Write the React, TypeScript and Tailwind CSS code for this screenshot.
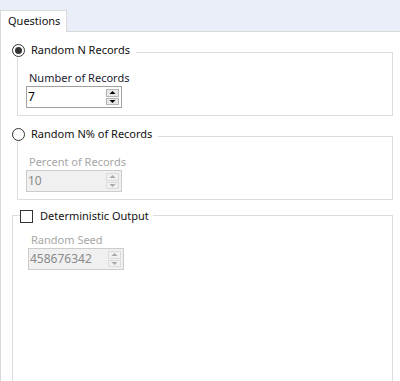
import type { ReactNode } from "react";

const FONT = { fontFamily: "'Noto Sans', 'Open Sans', sans-serif" };

function Radio({ checked }: { checked?: boolean }) {
  return (
    <span className="w-[13px] h-[13px] rounded-full border border-[#333333] bg-white flex items-center justify-center shrink-0">
      {checked && <span className="w-[7px] h-[7px] rounded-full bg-[#333333]" />}
    </span>
  );
}

function Checkbox() {
  return <span className="w-[13px] h-[13px] border border-[#333333] bg-white shrink-0" />;
}

function Arrow({ up, disabled }: { up?: boolean; disabled?: boolean }) {
  const fill = disabled ? "#a8a8a8" : "#000000";
  return (
    <svg width="7" height="3" viewBox="0 0 7 3">
      {up ? <polygon points="0.5,3 6.5,3 3.5,0" fill={fill} /> : <polygon points="0.5,0 6.5,0 3.5,3" fill={fill} />}
    </svg>
  );
}

function Spinner({ value, disabled }: { value: string; disabled?: boolean }) {
  const btn = disabled ? "border-[#dcdcdc] bg-[#f0f0f0]" : "border-[#b4b4b4] bg-[#e8e8e8]";
  return (
    <div
      className={`relative h-[22px] w-[96px] border ${
        disabled ? "border-[#cccccc] bg-[#f0f0f0] text-[#8a8a8a]" : "border-[#a0a0a0] bg-white text-black"
      } flex items-center pl-[1px] text-[12px]`}
    >
      {value}
      <div className="absolute right-[2px] top-[2px] bottom-[2px] w-[13px] flex flex-col gap-[1px]">
        <div className={`flex-1 flex items-center justify-center border ${btn}`}>
          <Arrow up disabled={disabled} />
        </div>
        <div className={`flex-1 flex items-center justify-center border ${btn}`}>
          <Arrow disabled={disabled} />
        </div>
      </div>
    </div>
  );
}

function Group({
  mark,
  title,
  children,
  disabledLabel,
  label,
}: {
  mark: ReactNode;
  title: string;
  children: ReactNode;
  disabledLabel?: boolean;
  label: string;
}) {
  return (
    <div className="flex flex-col">
      <div className="relative z-10 flex items-center h-[16px] mt-[10px] ml-[11px]">
        <span className="flex items-center bg-white pr-[6px] text-[11px] text-[#111111]">
          {mark}
          <span className="ml-[6px]">{title}</span>
        </span>
      </div>
      <div className="border border-[#dcdcdc] mt-[-6px] ml-[16px] w-[376px] pt-[17px] pb-[7px] pl-[8px]">
        <div className={`text-[11px] leading-[16px] pl-[3px] ${disabledLabel ? "text-[#a6a6a6]" : "text-[#1a1a2e]"}`}>
          {label}
        </div>
        {children}
      </div>
    </div>
  );
}

export default function App() {
  return (
    <div className="w-[400px] h-[381px] overflow-hidden bg-white flex flex-col" style={FONT}>
      <div className="h-[32px] shrink-0 bg-[#eaeef9] border-b border-[#d9d9d9] flex items-end">
        <div className="h-[22px] w-[67px] mb-[-1px] bg-white border-t border-r border-l border-[#d9d9d9] pl-[7px] text-[11px] text-[#111111] leading-[20px]">
          Questions
        </div>
      </div>

      <div className="flex-1 border-l border-[#d9d9d9] flex flex-col">
        <Group mark={<Radio checked />} title="Random N Records" label="Number of Records">
          <Spinner value="7" />
        </Group>

        <Group mark={<Radio />} title="Random N% of Records" label="Percent of Records" disabledLabel>
          <Spinner value="10" disabled />
        </Group>

        <div className="flex flex-col">
          <div className="relative z-10 flex items-center h-[16px] mt-[8px] ml-[19px]">
            <span className="flex items-center bg-white pr-[4px] text-[11px] text-[#111111]">
              <Checkbox />
              <span className="ml-[7px]">Deterministic Output</span>
            </span>
          </div>
          <div className="mt-[-9px] ml-[11px] w-[381px] border border-[#dcdcdc] h-[300px] shrink-0 pt-[16px] pl-[15px]">
            <div className="text-[11px] leading-[16px] text-[#a6a6a6] pl-[3px]">Random Seed</div>
            <Spinner value="458676342" disabled />
          </div>
        </div>
      </div>
    </div>
  );
}
